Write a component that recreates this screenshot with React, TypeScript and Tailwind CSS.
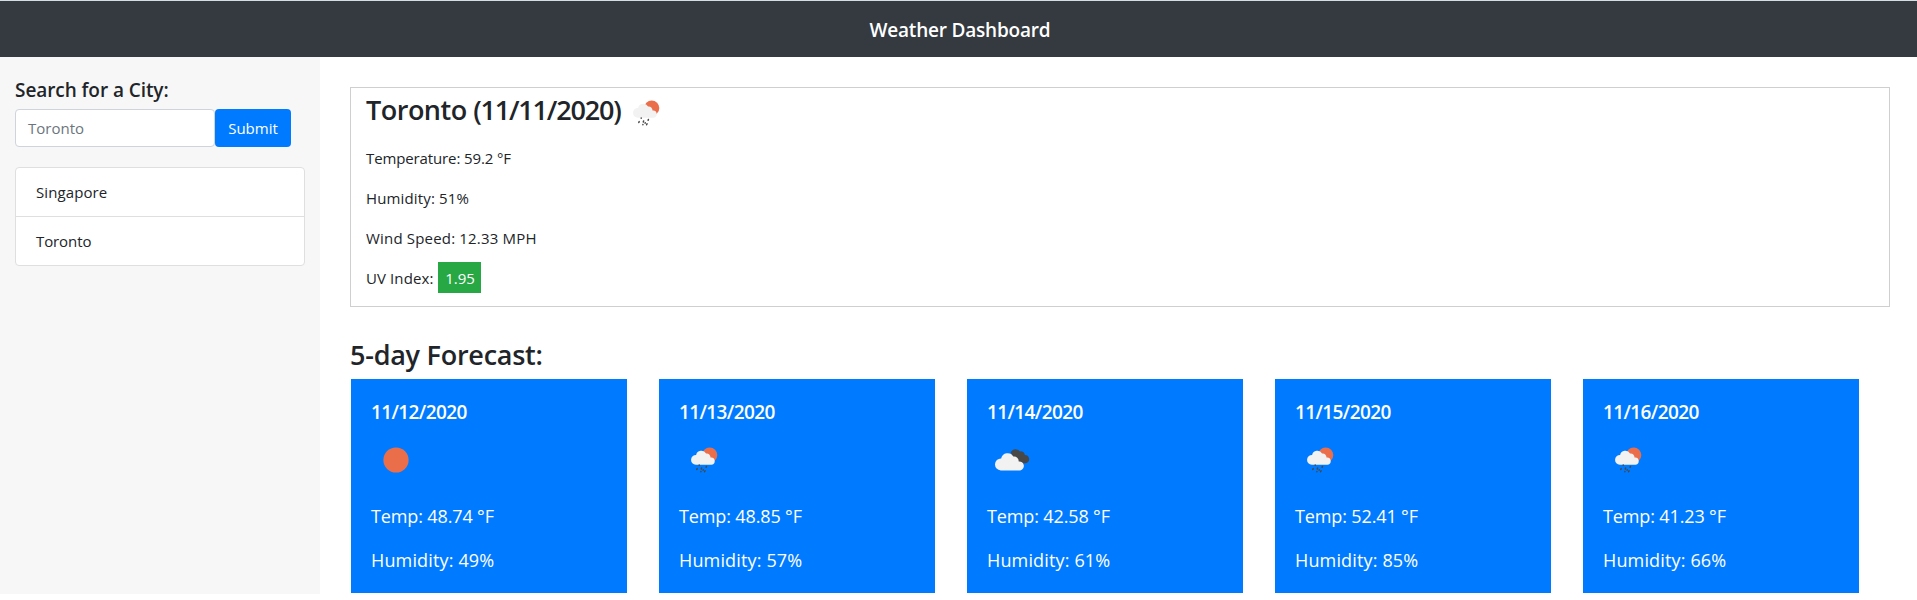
import React from "react";

type Kind = "sun" | "rain" | "cloud";

const forecast: { date: string; kind: Kind; temp: string; humidity: string }[] = [
  { date: "11/12/2020", kind: "sun", temp: "48.74", humidity: "49" },
  { date: "11/13/2020", kind: "rain", temp: "48.85", humidity: "57" },
  { date: "11/14/2020", kind: "cloud", temp: "42.58", humidity: "61" },
  { date: "11/15/2020", kind: "rain", temp: "52.41", humidity: "85" },
  { date: "11/16/2020", kind: "rain", temp: "41.23", humidity: "66" },
];

function Cloud() {
  return <path d="M4.9 15.5a4.9 4.9 0 0 1 .3-9.8A5.4 5.4 0 0 1 15.2 4.2a3.8 3.8 0 0 1 4.4 4A3.7 3.7 0 0 1 20.8 15.5Z" />;
}

function WeatherIcon({ kind }: { kind: Kind }) {
  return (
    <svg className="block size-[50px] shrink-0" viewBox="0 0 50 50">
      {kind === "sun" && <circle cx="25" cy="25" r="12.6" fill="#eb6e4b" />}
      {kind === "rain" && (
        <>
          <circle cx="30.7" cy="20" r="7.6" fill="#eb6e4b" />
          <g fill="#f2f2f2" transform="translate(11.9 14.3)">
            <Cloud />
          </g>
          <g stroke="#484848" strokeWidth="1.5" strokeLinecap="round">
            <path d="M20.2 29.9v.4M18.2 33.6l-.4.9M22.6 33l-.3 1M27.4 31.4l-.3.9M21.9 36.6v.2M26 35.8l-.4 1M24.2 34.7l-.1.5" />
          </g>
        </>
      )}
      {kind === "cloud" && (
        <>
          <g fill="#484848" transform="translate(20.6 12.8)">
            <path d="M3 4.5A5.6 5.6 0 0 1 12.4 3.6a3.8 3.8 0 0 1 4.8 3.6A4.2 4.2 0 0 1 18.6 15.4L9 16Z" />
          </g>
          <g fill="#f2f2f2" transform="translate(7.8 16.5) scale(1.22)">
            <Cloud />
          </g>
        </>
      )}
    </svg>
  );
}

export default function App() {
  return (
    <div className="h-[600px] overflow-hidden bg-white font-['Open_Sans',sans-serif] text-[#212529]">
      <header className="flex h-[57px] items-center justify-center border-t border-[#d5dfe3] bg-[#343a40] pt-[2px] pl-[3px] text-white">
        <h1 className="text-[19px] font-semibold tracking-[-0.2px]">Weather Dashboard</h1>
      </header>
      <div className="flex">
        <aside className="h-[537px] w-[320px] bg-[#f7f7f7] px-[15px] pt-[21px]">
          <h2 className="h-[31px] text-[19px] leading-6 font-semibold tracking-[-0.07px] whitespace-nowrap">Search for a City:</h2>
          <form className="flex">
            <div className="flex h-[38px] w-[200px] items-center rounded border border-[#ced4da] bg-white px-3 pt-px text-[15px] text-[#6c757d]">
              <span>Toronto</span>
            </div>
            <button type="button" className="h-[38px] w-[76px] rounded bg-[#007bff] text-[15px] text-white">
              <span>Submit</span>
            </button>
          </form>
          <ul className="mt-5 w-[290px] divide-y divide-[#dfdfdf] rounded border border-[#dfdfdf] bg-white text-[15px]">
            <li className="flex h-[49px] items-center px-5 tracking-[0.1px]"><span>Singapore</span></li>
            <li className="flex h-[48px] items-center px-5 tracking-[-0.1px]"><span>Toronto</span></li>
          </ul>
        </aside>
        <main className="flex-1 pt-[30px] pr-[27px] pl-[30px]">
          <section className="h-[220px] border border-[#cfcfcf] px-[15px] text-[15px]">
            <div className="flex h-[51px] items-start">
              <h2 className="pt-[5px] text-[27px] leading-[34px] font-semibold whitespace-nowrap">
                <span className="tracking-[-0.5px]">Toronto </span>
                <span className="tracking-[-1.2px]">(11/11/2020)</span>
              </h2>
              <WeatherIcon kind="rain" />
            </div>
            <p className="mt-[7px] mb-4 h-6 leading-6 tracking-[-0.12px]">Temperature: 59.2 °F</p>
            <p className="mb-4 h-6 leading-6 tracking-[0.15px]">Humidity: 51%</p>
            <p className="mb-4 h-6 leading-6 tracking-[0.18px]">Wind Speed: 12.33 MPH</p>
            <p className="flex h-6 items-center leading-6">
              <span className="tracking-[0.1px]">UV Index:</span>
              <span className="-mt-px ml-[5px] flex h-[31px] w-[43px] items-center justify-center bg-[#28a745] text-white">1.95</span>
            </p>
          </section>
          <h2 className="mt-[31px] h-[41px] text-[27px] leading-[34px] font-semibold tracking-[-0.25px]">5-day Forecast:</h2>
          <div className="flex gap-8 pl-px">
            {forecast.map((day) => (
              <article key={day.date} className="h-[214px] w-[276px] bg-[#007bff] px-5 pt-[21px] text-[18px] text-white">
                <h3 className="h-6 text-[19px] leading-6 font-semibold tracking-[-0.6px]">{day.date}</h3>
                <div className="mt-[11px] mb-[18px]"><WeatherIcon kind={day.kind} /></div>
                <p className="h-[44px] leading-[27px] tracking-[-0.13px]">Temp: {day.temp} °F</p>
                <p className="leading-[27px] tracking-[0.15px]">Humidity: {day.humidity}%</p>
              </article>
            ))}
          </div>
        </main>
      </div>
    </div>
  );
}
